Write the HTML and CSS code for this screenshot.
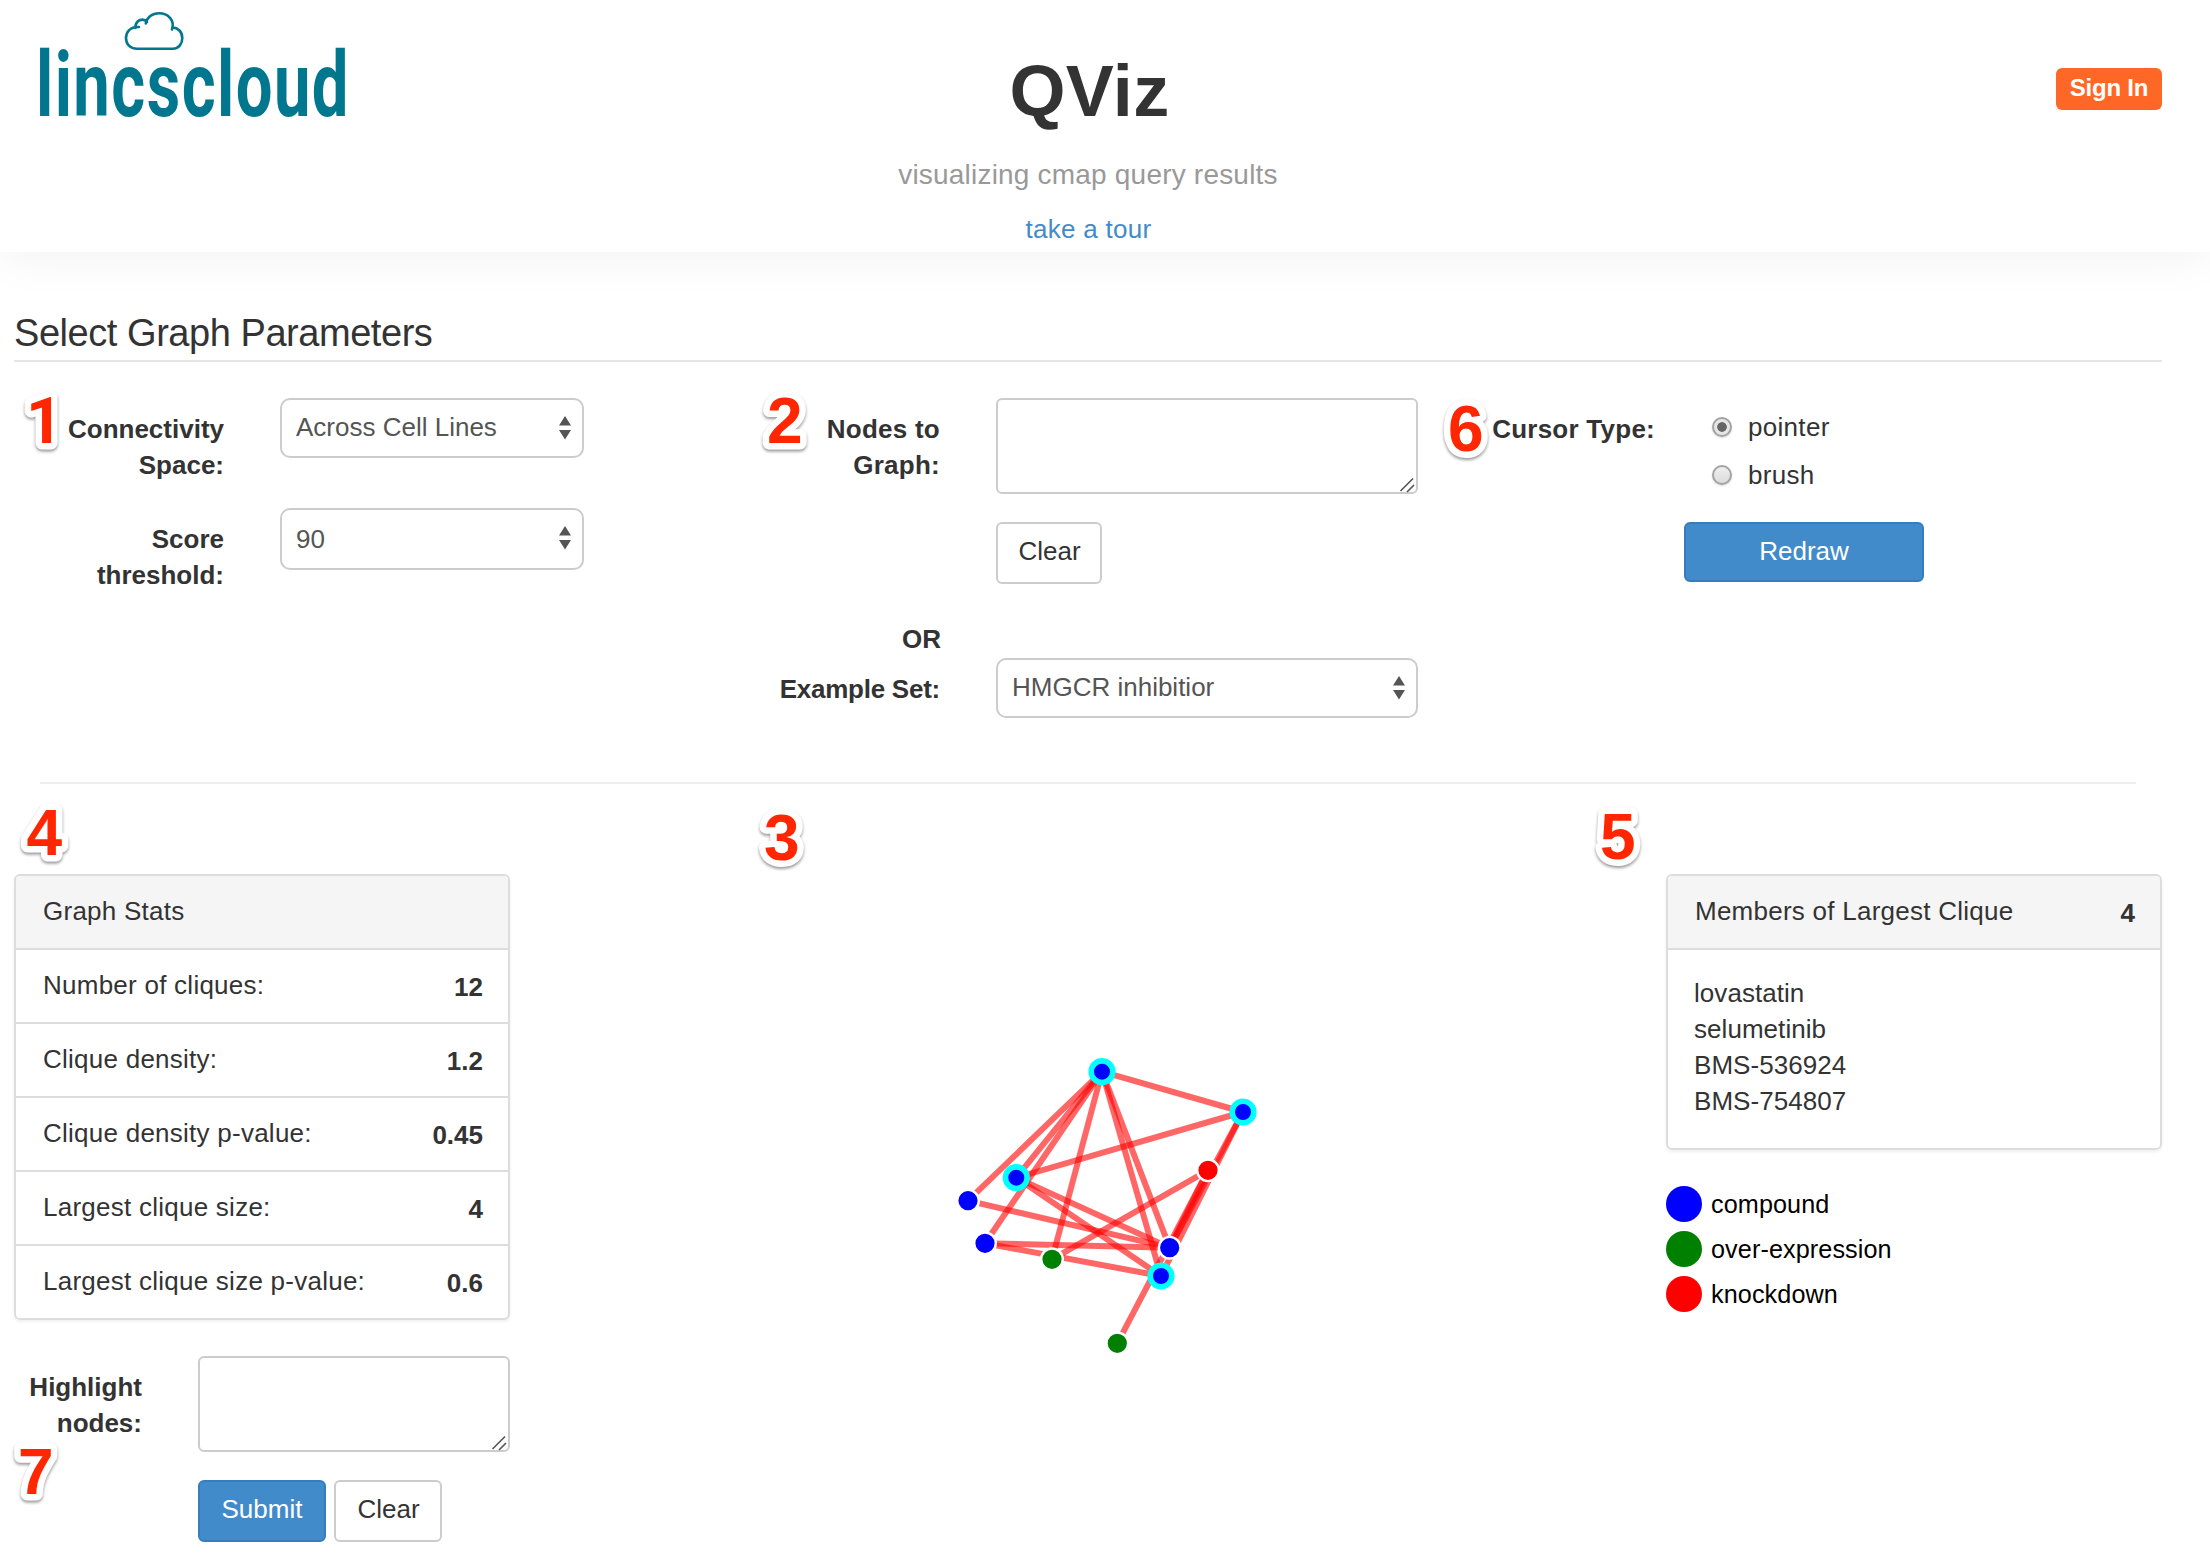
FILE: index.html
```html
<!DOCTYPE html>
<html lang="en">
<head>
<meta charset="utf-8">
<title>QViz</title>
<link rel="stylesheet" href="styles.css">
</head>
<body>
<header class="site-header">
  <a class="logo" href="#">
    <svg width="330" height="130" viewBox="0 0 330 130">
      <path class="cloud" d="M123 48.700H159C165 48.700 168.300 43.500 168.300 38C168.300 32 164 27.500 158.500 27.500M158 29.500C161 20 154 13.200 145 13.200C138 13.200 133 17.500 131.800 23.500M133 22C129 17.500 121 20 121.500 28M125 27C116 26.500 112 32 112 38C112 44 116 48.700 123 48.700"/>
      <text class="wordmark" x="22" y="116" textLength="314" lengthAdjust="spacingAndGlyphs">lincscloud</text>
    </svg>
  </a>
  <div class="brand">
    <h1>QViz</h1>
    <p class="tagline">visualizing cmap query results</p>
    <a class="tour" href="#">take a tour</a>
  </div>
  <button class="sign-in">Sign In</button>
</header>

<main>
  <h2>Select Graph Parameters</h2>
  <section class="params">
    <div class="col col-space">
      <div class="row row-tall">
        <label>Connectivity<br>Space:</label>
        <div class="select"><select><option>Across Cell Lines</option></select><svg class="arrows" width="12" height="24"><path d="M6 0L12 9.500H0ZM6 23.500L0 14H12Z"/></svg></div>
      </div>
      <div class="row">
        <label>Score<br>threshold:</label>
        <div class="select select-tall"><select><option>90</option></select><svg class="arrows" width="12" height="24"><path d="M6 0L12 9.500H0ZM6 23.500L0 14H12Z"/></svg></div>
      </div>
    </div>
    <div class="col col-nodes">
      <div class="row">
        <label class="wide">Nodes to<br>Graph:</label>
        <div class="area"><textarea></textarea><svg class="grip" width="16" height="16"><path d="M1.500 14L14 1.500M8 15L15 8"/></svg></div>
      </div>
      <div class="row row-button"><button class="btn btn-narrow">Clear</button></div>
      <div class="row row-or"><b>OR</b></div>
      <div class="row">
        <label class="tight">Example Set:</label>
        <div class="select"><select><option>HMGCR inhibitior</option></select><svg class="arrows" width="12" height="24"><path d="M6 0L12 9.500H0ZM6 23.500L0 14H12Z"/></svg></div>
      </div>
    </div>
    <div class="col col-cursor">
      <label class="wide">Cursor Type:</label>
      <div class="cursor-controls">
        <div class="radio"><span class="dot dot-on"></span>pointer</div>
        <div class="radio"><span class="dot"></span>brush</div>
        <button class="btn btn-primary btn-redraw">Redraw</button>
      </div>
    </div>
  </section>
  <hr>
  <section class="results">
    <aside>
      <div class="panel">
        <div class="panel-head"><span>Graph Stats</span></div>
        <div class="stat"><span>Number of cliques:</span><b>12</b></div>
        <div class="stat"><span>Clique density:</span><b>1.2</b></div>
        <div class="stat"><span>Clique density p-value:</span><b>0.45</b></div>
        <div class="stat"><span>Largest clique size:</span><b>4</b></div>
        <div class="stat"><span>Largest clique size p-value:</span><b>0.6</b></div>
      </div>
      <div class="highlight">
        <label>Highlight<br>nodes:</label>
        <div class="highlight-controls">
          <div class="area"><textarea></textarea><svg class="grip" width="16" height="16"><path d="M1.500 14L14 1.500M8 15L15 8"/></svg></div>
          <div class="buttons"><button class="btn btn-primary btn-submit">Submit</button><button class="btn btn-clear">Clear</button></div>
        </div>
      </div>
    </aside>
    <svg class="graph" width="1156" height="520" viewBox="510 874 1156 520">
      <g class="links">
        <path d="M1102 1071.700L968 1200.700"/><path d="M1102 1071.700L1016.300 1177.700"/><path d="M1102 1071.700L985 1243.300"/><path d="M1102 1071.700L1052 1259.300"/><path d="M1102 1071.700L1161 1276"/><path d="M1102 1071.700L1169.700 1247.700"/><path d="M1102 1071.700L1243 1112"/>
        <path d="M1243 1112L1016.300 1177.700"/><path d="M1243 1112L1169.700 1247.700"/><path d="M1243 1112L1161 1276"/>
        <path d="M1208 1170.300L1052 1259.300"/><path d="M1208 1170.300L1169.700 1247.700"/><path d="M1208 1170.300L1117.300 1343.300"/>
        <path d="M1016.300 1177.700L1169.700 1247.700"/><path d="M1016.300 1177.700L1161 1276"/><path d="M968 1200.700L1169.700 1247.700"/><path d="M985 1243.300L1169.700 1247.700"/><path d="M985 1243.300L1161 1276"/>
      </g>
      <g class="nodes">
        <circle class="compound" cx="968" cy="1200.700" r="10.800"/>
        <circle class="compound" cx="985" cy="1243.300" r="10.800"/>
        <circle class="over" cx="1052" cy="1259.300" r="10.800"/>
        <circle class="compound" cx="1169.700" cy="1247.700" r="10.800"/>
        <circle class="knock" cx="1208" cy="1170.300" r="10.800"/>
        <circle class="over" cx="1117.300" cy="1343.300" r="10.800"/>
        <circle class="compound member" cx="1102" cy="1071.700" r="10.800"/>
        <circle class="compound member" cx="1243" cy="1112" r="10.800"/>
        <circle class="compound member" cx="1016.300" cy="1177.700" r="10.800"/>
        <circle class="compound member" cx="1161" cy="1276" r="10.800"/>
      </g>
    </svg>
    <aside>
      <div class="panel">
        <div class="panel-head"><span>Members of Largest Clique</span><b>4</b></div>
        <ul class="members"><li>lovastatin</li><li>selumetinib</li><li>BMS-536924</li><li>BMS-754807</li></ul>
      </div>
      <ul class="legend">
        <li><i class="swatch swatch-compound"></i>compound</li>
        <li><i class="swatch swatch-over"></i>over-expression</li>
        <li><i class="swatch swatch-knock"></i>knockdown</li>
      </ul>
    </aside>
  </section>
</main>

<svg class="callouts" width="2210" height="1568">
  <text class="one" x="26" y="443">1</text>
  <text x="767" y="443">2</text>
  <text x="764" y="860">3</text>
  <text x="26.500" y="855">4</text>
  <text x="1600" y="859">5</text>
  <text x="1448" y="451">6</text>
  <text x="18" y="1494">7</text>
</svg>
</body>
</html>
```
FILE: styles.css
```css
* { box-sizing: border-box; }
body {
  margin: 0;
  background: #fff;
  color: #333;
  font: 26px/36px "Liberation Sans", Arial, sans-serif;
  letter-spacing: 0.3px;
  position: relative;
  height: 1568px;
  overflow: hidden;
}
h1, h2, p, ul { margin: 0; padding: 0; list-style: none; }
a { text-decoration: none; }
label, b { font-weight: bold; letter-spacing: 0; }
button, select, textarea { font: inherit; letter-spacing: inherit; margin: 0; }

.site-header {
  height: 252px;
  padding: 0 48px 0 14px;
  display: grid;
  grid-template-columns: 1fr auto 1fr;
  align-items: start;
  background: #fff;
  box-shadow: 0 0 50px rgba(0, 0, 0, 0.065);
}
.logo svg { display: block; overflow: visible; }
.cloud { fill: none; stroke: #00778f; stroke-width: 2.6; stroke-linecap: round; }
.wordmark { font: bold 91px Roboto, sans-serif; fill: #00778f; letter-spacing: 2px; }
.brand { text-align: center; padding-top: 51px; }
h1 { font-size: 72px; line-height: 80px; letter-spacing: 0.3px; padding-left: 3px; }
.tagline { margin-top: 24px; font-size: 28px; line-height: 40px; letter-spacing: 0.2px; color: #999; }
.tour { display: block; margin-top: 16px; padding-left: 1px; color: #428bca; }
.sign-in {
  justify-self: end;
  margin-top: 68px;
  width: 106px;
  height: 42px;
  padding: 0 0 2px;
  border: 0;
  border-radius: 6px;
  background: #ff6726;
  color: #fff;
  font-weight: bold;
  font-size: 24px;
  letter-spacing: -0.2px;
}

main { padding: 53px 48px 0 14px; }
h2 {
  font-weight: normal;
  font-size: 38px;
  line-height: 53px;
  padding-top: 2px;
  letter-spacing: -0.45px;
  border-bottom: 2px solid #e5e5e5;
}
.params {
  display: grid;
  grid-template-columns: 726px 702px 720px;
  height: 420px;
  padding-top: 36px;
}
.row { display: flex; align-items: flex-start; }
label { padding-top: 13px; text-align: right; flex: none; }
label.wide { letter-spacing: 0.25px; }
label.tight { letter-spacing: -0.25px; }
.col-space label { width: 210px; margin-right: 56px; }
.col-space .select { width: 304px; }
.row-tall { height: 110px; }
.col-nodes label { width: 200px; margin-right: 56px; }
.col-nodes .select, .col-nodes .area { width: 422px; }
.row-button { padding: 28px 0 0 256px; }
.row-or { width: 201px; justify-content: flex-end; margin: 37px 0 1px; }
.col-cursor { display: flex; align-items: flex-start; }
.col-cursor label { width: 213px; margin-right: 29px; }
.cursor-controls { display: grid; row-gap: 12px; padding-top: 11px; }
.radio { display: flex; align-items: center; gap: 16px; padding-left: 28px; }
.dot {
  width: 20px;
  height: 20px;
  border: 2px solid #a3a3a3;
  border-radius: 50%;
  background: linear-gradient(#eee, #dcdcdc);
  box-shadow: 0 1px 2px rgba(0, 0, 0, 0.15);
}
.dot-on { background: radial-gradient(circle, #666 4.4px, #e6e6e6 5.2px); }

.select, .area { position: relative; flex: none; }
select {
  display: block;
  appearance: none;
  width: 100%;
  height: 60px;
  padding: 0 14px 2px;
  border: 2px solid #ccc;
  border-radius: 10px;
  background: #fff;
  color: #555;
  letter-spacing: 0;
}
.select-tall select { height: 62px; padding-bottom: 1px; }
.arrows { position: absolute; right: 13px; top: 18px; fill: #555; }
textarea {
  display: block;
  width: 100%;
  height: 96px;
  border: 2px solid #ccc;
  border-radius: 6px;
  resize: none;
}
.grip { position: absolute; right: 3px; bottom: 1px; fill: none; stroke: #555; stroke-width: 1.6; }

.btn {
  height: 62px;
  padding: 0 0 4px 1px;
  border: 2px solid #ccc;
  border-radius: 6px;
  background: #fff;
  color: #333;
  letter-spacing: 0;
}
.btn-primary { padding-left: 0; background: #428bca; border-color: #357ebd; color: #fff; }
.btn-narrow { width: 106px; }
.btn-redraw { width: 240px; height: 60px; padding-bottom: 2px; margin-top: 17px; }
.btn-submit { width: 128px; }
.btn-clear { width: 108px; }

hr { margin: 0 26px; border: 0; height: 2px; background: #eee; }
.results { display: flex; align-items: flex-start; padding-top: 90px; }
aside { width: 496px; flex: none; }
.panel {
  border: 2px solid #ddd;
  border-radius: 6px;
  overflow: hidden;
  box-shadow: 0 2px 3px rgba(0, 0, 0, 0.06);
}
.panel-head, .stat {
  display: flex;
  justify-content: space-between;
  height: 72px;
  padding: 17px 25px 0 27px;
  letter-spacing: 0.25px;
}
.panel-head { background: #f5f5f5; }
.panel b { margin-top: 2px; }
.stat { height: 74px; border-top: 2px solid #ddd; }
.members { height: 200px; border-top: 2px solid #ddd; padding: 25px 26px 0; letter-spacing: 0.05px; }
.highlight { display: flex; align-items: flex-start; margin-top: 36px; }
.highlight label { width: 128px; margin-right: 56px; }
.highlight-controls { width: 312px; }
.buttons { display: flex; gap: 8px; margin-top: 28px; }

.graph { display: block; flex: none; }
.links { stroke: red; stroke-opacity: 0.6; stroke-width: 6; fill: none; }
.nodes { stroke: #fff; stroke-width: 2.4; }
.compound { fill: blue; }
.over { fill: green; }
.knock { fill: red; }
.nodes .member { stroke: cyan; stroke-width: 5.6; }

.legend { margin-top: 36px; color: #000; font-size: 25.2px; letter-spacing: 0.1px; }
.legend li { display: flex; align-items: center; gap: 9px; margin-bottom: 9px; }
.swatch { width: 36px; height: 36px; border-radius: 50%; }
.swatch-compound { background: blue; }
.swatch-over { background: green; }
.swatch-knock { background: red; }

.callouts {
  position: absolute;
  left: 0;
  top: 0;
  pointer-events: none;
  font-weight: bold;
  font-size: 64px;
  letter-spacing: 0;
  fill: #ff2600;
  stroke: #fff;
  stroke-width: 13;
  stroke-linejoin: round;
  paint-order: stroke;
  filter: drop-shadow(0 2px 1.5px rgba(0, 0, 0, 0.4));
}
.one { font-family: Roboto, sans-serif; }
```
